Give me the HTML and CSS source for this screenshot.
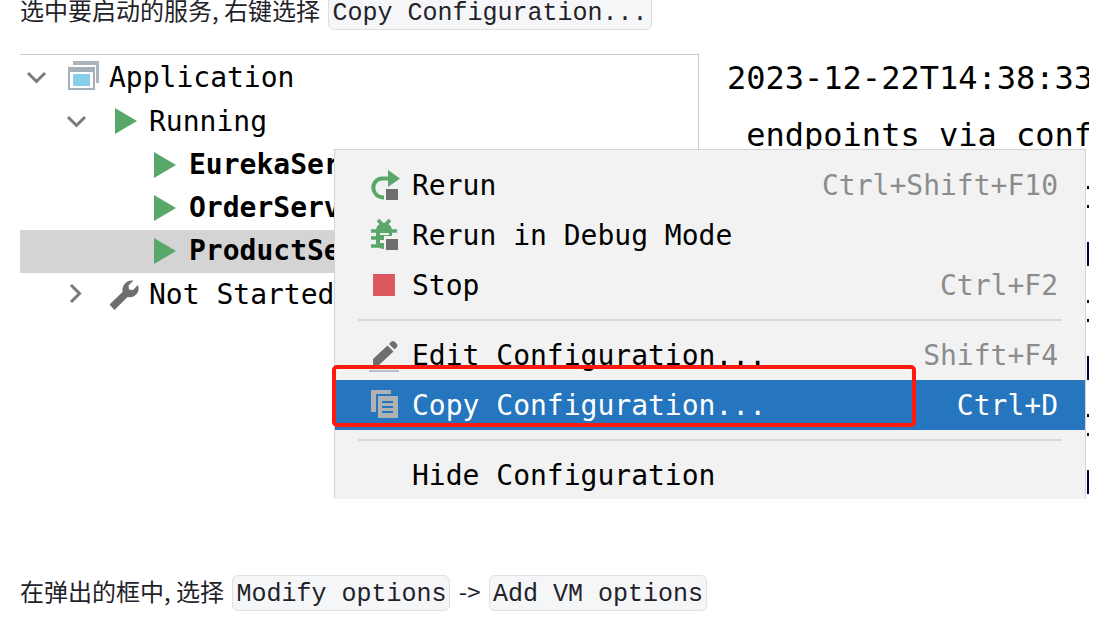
FILE: index.html
```html
<!DOCTYPE html>
<html lang="zh-CN">
<head>
    <meta charset="UTF-8">
    <title>Copy Configuration</title>
    <meta name="viewport" content="width=device-width, initial-scale=1.0">
    <link rel="stylesheet" href="styles.css">
</head>
<body>
    <p class="step">选中要启动的服务, 右键选择 <code>Copy Configuration...</code></p>

    <div class="ide">
        <div class="services">
            <div class="row">
                <button class="toggle" aria-label="Application"><svg width="32" height="32" viewBox="0 0 32 32"><path d="M8 12l8.500 8.500L25 12" fill="none" stroke="#7a7a7a" stroke-width="3"/></svg></button>
                <svg class="icon" width="32" height="32" viewBox="0 0 32 32">
                    <path d="M5 0h26v22h-3V4H5z" fill="#aab5bd"/>
                    <path d="M0 6h27v23H0z" fill="#a5b0b8"/>
                    <path d="M2 11h23v16H2z" fill="#fff"/>
                    <path d="M5 13h17v12H5z" fill="#87d0eb"/>
                </svg>
                <span>Application</span>
            </div>
            <div class="row level1">
                <button class="toggle" aria-label="Running"><svg width="32" height="32" viewBox="0 0 32 32"><path d="M8 12l8.500 8.500L25 12" fill="none" stroke="#7a7a7a" stroke-width="3"/></svg></button>
                <svg class="icon" width="32" height="32" viewBox="0 0 32 32"><path d="M7 3l22 13L7 29z" fill="#59a869"/></svg>
                <span>Running</span>
            </div>
            <div class="row level2">
                <svg class="icon" width="32" height="32" viewBox="0 0 32 32"><path d="M6 3l22 13L6 29z" fill="#59a869"/></svg>
                <b>EurekaServ</b>
            </div>
            <div class="row level2">
                <svg class="icon" width="32" height="32" viewBox="0 0 32 32"><path d="M6 3l22 13L6 29z" fill="#59a869"/></svg>
                <b>OrderServi</b>
            </div>
            <div class="row level2 selected">
                <svg class="icon" width="32" height="32" viewBox="0 0 32 32"><path d="M6 3l22 13L6 29z" fill="#59a869"/></svg>
                <b>ProductSer</b>
            </div>
            <div class="row level1">
                <button class="toggle" aria-label="Not Started"><svg width="32" height="32" viewBox="0 0 32 32"><path d="M11 7l8.500 8.500L11 24" fill="none" stroke="#7a7a7a" stroke-width="3"/></svg></button>
                <svg class="icon" width="32" height="32" viewBox="0 0 32 32"><path d="M1.500 26.500L14.500 14C13.500 8 18 1.500 25.500 2.500L20.500 7.500 21 11.500 25 12 30 7C32.500 14 27 20.500 19.500 19L6.500 32z" fill="#6e6e6e"/></svg>
                <span>Not Started</span>
            </div>
        </div>

        <div class="console">
            <div class="line">2023-12-22T14:38:33</div>
            <div class="line"> endpoints via conf</div>
            <div class="line edge"><i class="dots"></i></div>
            <div class="line edge"><i class="bar"></i></div>
            <div class="line edge"><i class="dots"></i></div>
            <div class="line edge"><i class="bar"></i></div>
            <div class="line edge"><i class="dots"></i></div>
            <div class="line edge"><i class="bar"></i></div>
        </div>

        <div class="menu">
            <button class="item">
                <svg class="icon" width="32" height="32" viewBox="0 0 32 32">
                    <path d="M22 9.500H14.500C1.500 10 2.500 28.500 16 28.500" fill="none" stroke="#59a869" stroke-width="4"/>
                    <path d="M20 1l12 8.500L20 18z" fill="#59a869"/>
                    <path d="M17 19h14v12H17z" fill="#f2f2f2"/>
                    <path d="M18 20h12v11H18z" fill="#6e6e6e"/>
                </svg>
                <span>Rerun</span>
                <kbd>Ctrl+Shift+F10</kbd>
            </button>
            <button class="item">
                <svg class="icon" width="32" height="32" viewBox="0 0 32 32">
                    <path d="M10 1l6 6 6-6M3 12h26M3 19h8M3 27h8" fill="none" stroke="#59a869" stroke-width="3.500"/>
                    <path d="M8 12C8 7 11 4 16 4s8 3 8 8v5h-8v13C11 30 8 27 8 23z" fill="#59a869"/>
                    <path d="M12 14h9v2h-9zM12 21h4v3h-4z" fill="#f2f2f2"/>
                    <path d="M16 18h15v13H16z" fill="#f2f2f2"/>
                    <path d="M18 20h12v11H18z" fill="#6e6e6e"/>
                </svg>
                <span>Rerun in Debug Mode</span>
            </button>
            <button class="item">
                <svg class="icon" width="32" height="32" viewBox="0 0 32 32"><path d="M5 5h22v22H5z" fill="#db5860"/></svg>
                <span>Stop</span>
                <kbd>Ctrl+F2</kbd>
            </button>
            <hr>
            <button class="item">
                <svg class="icon" width="32" height="32" viewBox="0 0 32 32">
                    <path d="M5 20L19.500 6.500l6 6L11 26H5z" fill="#6e6e6e"/>
                    <path d="M21 5l2.500-2.500q1.500-1 3 0L29 5q1 1.500 0 3l-2.500 2.500z" fill="#6e6e6e"/>
                    <path d="M1 31h30v2H1z" fill="#b5c1ca"/>
                </svg>
                <span>Edit Configuration...</span>
                <kbd>Shift+F4</kbd>
            </button>
            <button class="item active">
                <svg class="icon" width="32" height="32" viewBox="0 0 32 32">
                    <path d="M3 1h20v4H8v18H3z" fill="#afb1b3"/>
                    <path d="M10 7h20v22H10z" fill="#afb1b3"/>
                    <path d="M14 13h11M14 18h11M14 23h11" stroke="#2675bf" stroke-width="2"/>
                </svg>
                <span>Copy Configuration...</span>
                <kbd>Ctrl+D</kbd>
            </button>
            <hr>
            <button class="item">
                <span class="icon"></span>
                <span>Hide Configuration</span>
            </button>
        </div>
        <div class="highlight"></div>
    </div>

    <p class="step">在弹出的框中, 选择 <code>Modify options</code> -&gt; <code>Add VM options</code></p>
</body>
</html>
```
FILE: styles.css
```css
* {
    box-sizing: border-box;
}
body {
    margin: -10px 13px 0 20px;
    background-color: #fff;
    color: #1f2329;
    font-family: "Noto Sans CJK SC", sans-serif;
    font-size: 24px;
}
.step {
    height: 40px;
    margin: 0;
    line-height: 40px;
}
code {
    display: inline-block;
    height: 36px;
    margin: 0 3px;
    padding: 0 3px;
    border: 1px solid #dee0e3;
    border-radius: 6px;
    background-color: #f5f6f7;
    font-family: "Liberation Mono", monospace;
    font-size: 25px;
    line-height: 38px;
}
.ide {
    position: relative;
    display: flex;
    height: 445px;
    margin: 24px 0 72px;
    overflow: hidden;
    color: #000;
    font-family: "DejaVu Sans Mono", monospace;
    font-size: 28px;
}

/* services tree */
.services {
    flex: 0 0 679px;
    padding-top: 1px;
    border-top: 1px solid #c9c9c9;
    border-right: 1px solid #c9c9c9;
}
.row {
    display: flex;
    align-items: center;
    gap: 9px;
    height: 44px;
    padding-bottom: 2px;
}
.level1 {
    padding-left: 40px;
}
.level2 {
    height: 43px;
    padding-left: 128px;
}
.selected {
    background-color: #d4d4d4;
}
.toggle {
    width: 32px;
    height: 32px;
    margin-right: 7px;
    padding: 0;
    border: 0;
    background: none;
}
.toggle svg {
    display: block;
}
.icon {
    flex: none;
    width: 32px;
    height: 32px;
    overflow: visible;
}

/* console output */
.console {
    flex: 1;
    min-width: 0;
    padding-left: 28px;
    overflow: hidden;
    font-size: 32px;
}
.line {
    height: 57px;
    line-height: 48px;
    white-space: pre;
}
.edge {
    display: flex;
    align-items: center;
    justify-content: flex-end;
}
.dots {
    width: 2px;
    height: 22px;
    border-top: 3px solid #000;
    border-bottom: 3px solid #000;
}
.bar {
    width: 2px;
    height: 24px;
    background-color: #00003c;
}

/* context menu */
.menu {
    position: absolute;
    top: 95px;
    left: 314px;
    right: 3px;
    padding: 10px 0;
    border: 1px solid #d4d4d4;
    background-color: #f2f2f2;
}
.item {
    display: flex;
    align-items: center;
    gap: 12px;
    width: 100%;
    height: 50px;
    padding: 0 27px 0 33px;
    border: 0;
    background: none;
    color: #000;
    font: inherit;
    text-align: left;
}
.item kbd {
    margin-left: auto;
    color: #8c8c8c;
    font: inherit;
}
.item.active {
    background-color: #2675bf;
}
.item.active, .item.active kbd {
    color: #fff;
}
.menu hr {
    height: 2px;
    margin: 9px 23px;
    border: 0;
    background-color: #d9d9d9;
}
.highlight {
    position: absolute;
    top: 311px;
    left: 312px;
    width: 584px;
    height: 62px;
    border: 4px solid #ff1a0d;
    border-radius: 5px;
}
```
